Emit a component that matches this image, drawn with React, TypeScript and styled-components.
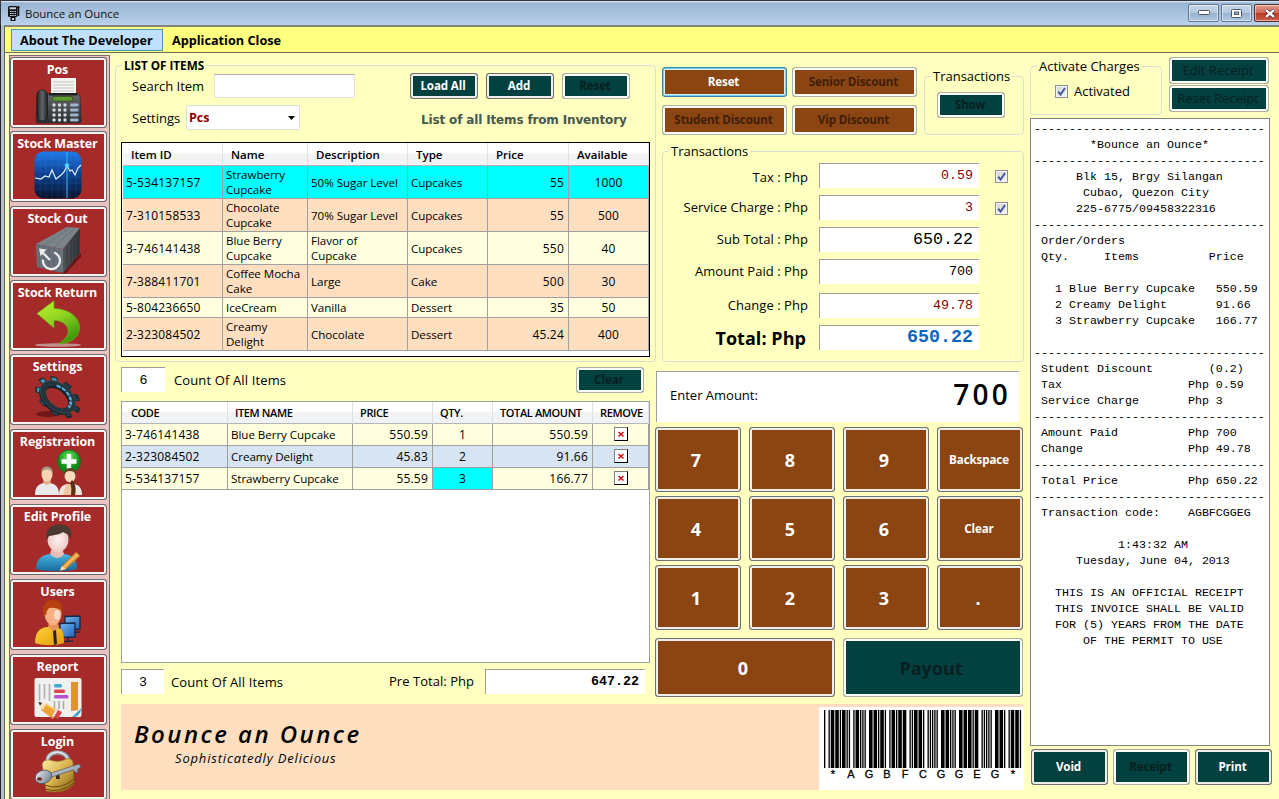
import React from "react";
import styled, { createGlobalStyle, css } from "styled-components";

const ui = `"Open Sans", "Noto Sans", sans-serif`;
const mono = `"Liberation Mono", "Courier New", monospace`;
const cream = "#ffffc0";
const teal = "#034040";
const brown = "#8b4513";

const Global = createGlobalStyle`
  * { box-sizing: border-box; }
  body { margin: 0; background: ${cream}; font: 13px/18px ${ui}; color: #000; overflow: hidden; }
`;

/* ---------- window chrome ---------- */

const Window = styled.div`
  width: 1279px;
  height: 799px;
  overflow: hidden;
  display: flex;
  flex-direction: column;
  background: ${cream};
  border-top: 1px solid #34343c;
`;

const TitleBar = styled.header`
  height: 24px;
  flex: none;
  display: flex;
  align-items: center;
  padding-left: 7px;
  background: linear-gradient(#e4eef8 0, #9ab5d3 2px, #a6c0dc 45%, #b9d1ea 100%);
  border-left: 1px solid #34343c;
`;

const AppTitle = styled.span`
  margin: 1px auto 0 5px;
  font-size: 11.5px;
  letter-spacing: -0.05px;
  color: #111;
`;

const Caption = styled.div<{ $close?: boolean }>`
  flex: none;
  width: 31px;
  height: 18px;
  margin: 0 ${(p) => (p.$close ? -6 : 0)}px 0 2px;
  display: flex;
  align-items: center;
  justify-content: center;
  border: 1px solid ${(p) => (p.$close ? "#5c2a2a" : "#66788e")};
  border-radius: 2px;
  box-shadow: inset 0 0 0 1px rgba(255, 255, 255, 0.5);
  background: ${(p) =>
    p.$close
      ? "linear-gradient(#e39b8c, #cf6a58 48%, #b93a24 52%, #cc6048)"
      : "linear-gradient(#c5d5e8, #b3c8df 48%, #97b1cf 52%, #b0c8e2)"};
`;

const Frame = styled.div`
  flex: 1;
  min-height: 0;
  display: flex;
  flex-direction: column;
  margin-left: 1px;
  border-left: 3px solid #b6bfd3;
  box-shadow: -1px 0 0 #222;
`;

const Client = styled.div`
  flex: 1;
  min-height: 0;
  display: flex;
  flex-direction: column;
  border-left: 1px solid #62625c;
  border-top: 2px solid #85857a;
`;

const MenuBar = styled.nav`
  height: 26px;
  flex: none;
  display: flex;
  align-items: center;
  padding: 0 0 0 6px;
  background: #ffff80;
  border-bottom: 1px solid #6e6e58;
  font-weight: 700;
`;

const MenuItem = styled.span<{ $active?: boolean }>`
  height: 22px;
  line-height: 21px;
  padding: 0 ${(p) => (p.$active ? 9 : 8)}px 0 8px;
  border: 1px solid ${(p) => (p.$active ? "#4c97b4" : "transparent")};
  background: ${(p) => (p.$active ? "#c0e0ff" : "none")};
  font-size: 12.7px;
`;

const Body = styled.div`
  flex: 1;
  min-height: 0;
  display: flex;
  align-items: flex-start;
`;

/* ---------- sidebar ---------- */

const Sidebar = styled.aside`
  flex: none;
  width: 101px;
  height: 746px;
  margin: 2px 0 0 4px;
  padding-top: 1px;
  display: flex;
  flex-direction: column;
  align-items: flex-start;
  border: solid #7a6a6a;
  border-width: 1px 1px 0;
  background: #e9c3c0;
`;

const SideButton = styled.div<{ $gap: number }>`
  flex: none;
  width: 97px;
  height: 71px;
  margin-bottom: ${(p) => p.$gap}px;
  padding: 3px 2px 0 0;
  display: flex;
  flex-direction: column;
  align-items: center;
  border: 1px solid #6b6b6b;
  border-radius: 3px;
  background: #a52a2a;
  box-shadow: inset 0 0 0 2px #f6f3f3;
  color: #fff;
  font-size: 12.5px;
  font-weight: 700;
  letter-spacing: -0.1px;

  svg {
    display: block;
    margin-top: -2px;
  }
`;

/* ---------- shared controls ---------- */

type Tone = "teal" | "brown";

const PushButton = styled.button<{
  $tone: Tone;
  $w: number;
  $h: number;
  $size?: number;
  $focus?: boolean;
}>`
  flex: none;
  width: ${(p) => p.$w}px;
  height: ${(p) => p.$h}px;
  padding: ${(p) => (p.$size ? "1px 4px 0 0" : "0 2px 1px 0")};
  border: 1px solid #707070;
  border-radius: 3px;
  background: ${(p) => (p.$tone === "teal" ? teal : brown)};
  box-shadow: inset 0 0 0 2px #efefea;
  color: #fff;
  font: 700 ${(p) => p.$size ?? 11.6}px ${ui};
  letter-spacing: ${(p) => (p.$size ? 0 : -0.12)}px;
  white-space: nowrap;
  ${(p) =>
    p.$focus &&
    css`
      border-color: #3a87a8;
      box-shadow: inset 0 0 0 1px #6fd0ee, inset 0 0 0 2px #d8f2f6;
    `}
  &:disabled {
    border-color: #adb2a8;
    box-shadow: inset 0 0 0 2px #fbfdf4;
    color: ${(p) => (p.$tone === "teal" ? "#062020" : "#3f1e06")};
  }
`;

const LightCaption = styled(PushButton)`
  font-size: 13px;
  font-weight: 400;
  letter-spacing: 0;
`;

const Group = styled.section`
  border: 1px solid #d8dfd2;
  border-radius: 4px;
`;

const Legend = styled.h2<{ $bold?: boolean }>`
  width: fit-content;
  margin: -10px 0 0 6px;
  padding: 0 2px;
  background: ${cream};
  font: ${(p) => (p.$bold ? 700 : 400)} ${(p) => (p.$bold ? 11.7 : 13)}px/18px ${ui};
  white-space: nowrap;
`;

const Field = styled.div<{
  $w: number;
  $h?: number;
  $size?: number;
  $color?: string;
  $bold?: boolean;
  $center?: boolean;
}>`
  flex: none;
  width: ${(p) => p.$w}px;
  height: ${(p) => p.$h ?? 25}px;
  padding: ${(p) => (p.$center ? "0" : "0 6px 2px 0")};
  display: flex;
  align-items: center;
  justify-content: ${(p) => (p.$center ? "center" : "flex-end")};
  border: solid #a0a096;
  border-width: 1px 0 0 1px;
  background: #fff;
  color: ${(p) => p.$color ?? "#000"};
  font: ${(p) => (p.$bold ? 700 : 400)} ${(p) => p.$size ?? 13.33}px ${mono};
`;

const CheckBox = styled.span`
  flex: none;
  width: 13px;
  height: 13px;
  display: flex;
  align-items: center;
  justify-content: center;
  border: 1px solid #8e8f8f;
  background: linear-gradient(135deg, #cfd4da, #f4f5f6);
  box-shadow: inset 0 0 0 1px #f4f4f4;
`;

const Checked = () => (
  <CheckBox>
    <svg width="9" height="9" viewBox="0 0 9 9">
      <path d="M1.2 4.6 3.6 7.6 8 .9" fill="none" stroke="#46569c" strokeWidth="1.9" />
    </svg>
  </CheckBox>
);

/* ---------- left column ---------- */

const Work = styled.main`
  flex: none;
  width: 908px;
  margin-left: 6px;
  display: grid;
  grid-template-columns: 541px 367px;
  grid-template-rows: 651px 86px;
`;

const Column = styled.div`
  display: flex;
  flex-direction: column;
`;

const ListGroup = styled(Group)`
  height: 297px;
  margin: 12px 0 0 -1px;
  width: 541px;
  padding-left: 5px;
`;

const ListLegend = styled(Legend)`
  margin-left: 1px;
`;

const SearchRow = styled.div`
  display: flex;
  align-items: center;
  height: 26px;
  margin: -1px 0 0 11px;
`;

const SearchLabel = styled.span`
  width: 82px;
`;

const SearchBox = styled.div`
  width: 141px;
  height: 24px;
  margin-right: 55px;
  background: #fff;
  border: 1px solid #e1e3dc;
  border-top-color: #abadb3;
`;

const ListButtons = styled.div`
  display: flex;
  gap: 8px;
`;

const SettingsRow = styled.div`
  display: flex;
  align-items: center;
  height: 25px;
  margin: 6px 0 12px 11px;
`;

const SettingsLabel = styled.span`
  width: 54px;
`;

const Combo = styled.div`
  width: 114px;
  height: 25px;
  padding: 0 4px 0 2px;
  display: flex;
  align-items: center;
  justify-content: space-between;
  border: 1px solid #dcdfd8;
  border-radius: 2px;
  background: #fff;
  color: #8b0000;
  font-size: 12.5px;
  font-weight: 700;
`;

const ListHint = styled.span`
  margin: 5px 0 0 121px;
  color: #46594f;
  font: 700 12px "DejaVu Sans", sans-serif;
  letter-spacing: -0.15px;
  white-space: nowrap;
`;

const ItemTable = styled.div`
  width: 529px;
  height: 215px;
  padding-left: 1px;
  border: 1px solid #000;
  background: #fff;
`;

const ItemRow = styled.div<{ $fill?: string; $h: number }>`
  display: grid;
  grid-template-columns: 100px 85px 100px 80px 81px 80px;
  height: ${(p) => p.$h}px;
  background: ${(p) => p.$fill ?? "#fff"};
`;

const OrderRow = styled(ItemRow)`
  grid-template-columns: 106px 125px 80px 60px 100px 56px;
`;

const HeadCell = styled.div<{ $pad: number }>`
  display: flex;
  align-items: center;
  padding: 1px 0 0 ${(p) => p.$pad}px;
  background: linear-gradient(#fff 45%, #f2f3f5 50%, #f1f2f4);
  border-right: 1px solid #dfe1e4;
  border-bottom: 1px solid #b4b6b8;
  font-size: 11.5px;
  font-weight: 600;
  white-space: nowrap;
`;

const OrderHead = styled(HeadCell)`
  padding-top: 0;
  font-size: 11px;
  letter-spacing: -0.38px;
`;

const Cell = styled.div<{ $align?: "right" | "center"; $fill?: string }>`
  display: flex;
  align-items: center;
  justify-content: ${(p) =>
    p.$align === "right" ? "flex-end" : p.$align === "center" ? "center" : "flex-start"};
  padding: 0 ${(p) => (p.$align === "right" ? 4 : p.$align === "center" ? 0 : 3)}px 0
    ${(p) => (p.$align === "center" ? 0 : 3)}px;
  border: solid #a0a0a0;
  border-width: 0 1px 1px 0;
  background: ${(p) => p.$fill ?? "none"};
  font-size: 11.6px;
  line-height: 15px;
  letter-spacing: -0.05px;
`;

const NumberCell = styled(Cell)`
  font-size: 12px;
  letter-spacing: 0.2px;
`;

const CountRow = styled.div`
  display: flex;
  align-items: center;
  height: 27px;
  margin: 4px 0 8px 5px;
`;

const CountLabel = styled.span<{ $gap: number }>`
  margin-left: ${(p) => p.$gap}px;
  letter-spacing: 0.13px;
`;

const ClearSlot = styled.div`
  display: flex;
  margin: 0 13px 0 auto;
`;

const OrderTable = styled.div`
  width: 529px;
  height: 262px;
  margin-left: 5px;
  border: 1px solid #a0a0a0;
  background: #fff;
`;

const RemoveBox = styled.span`
  width: 14px;
  height: 14px;
  margin-bottom: 1px;
  display: flex;
  align-items: center;
  justify-content: center;
  border: 1px solid #000;
  border-top-color: #808080;
  border-left-color: #808080;
  background: #fff;
`;

const TotalRow = styled.div`
  display: flex;
  align-items: center;
  height: 25px;
  margin: 6px 0 0 5px;
`;

const PreTotalLabel = styled.span`
  margin: -1px 11px 0 auto;
  letter-spacing: 0.04px;
`;

const PreTotalField = styled(Field)`
  margin-right: 12px;
`;

/* ---------- middle column ---------- */

const Middle = styled(Column)`
  padding: 14px 0 0 5px;
`;

const TopRow = styled.div`
  display: flex;
  height: 68px;
`;

const Discounts = styled.div`
  display: grid;
  grid-template-columns: 125px 125px;
  gap: 8px 5px;
  height: 68px;
`;

const ShowGroup = styled(Group)`
  width: 100px;
  height: 59px;
  margin: 9px 0 0 7px;
`;

const ShowSlot = styled.div`
  display: flex;
  padding: 7px 0 0 12px;
`;

const TransactionGroup = styled(Group)`
  width: 362px;
  height: 211px;
  margin-top: 16px;
`;

const AmountRow = styled.div<{ $gap?: number; $shift?: number }>`
  display: flex;
  align-items: center;
  height: 25px;
  margin-bottom: ${(p) => p.$gap ?? 7}px;

  > label {
    width: 146px;
    margin: ${(p) => p.$shift ?? -2}px 11px 0 -1px;
    text-align: right;
    white-space: nowrap;
    letter-spacing: 0.05px;
  }
  > ${CheckBox} {
    margin: 2px 0 0 16px;
  }
`;

const TotalLabel = styled.label`
  font-size: 18px;
  font-weight: 700;
  padding-right: 2px;
`;

const AmountRows = styled.div`
  padding-top: 3px;
`;

const EnterPanel = styled.div`
  width: 363px;
  height: 51px;
  margin: 9px 0 5px -6px;
  padding: 0 8px 4px 13px;
  display: flex;
  align-items: center;
  justify-content: space-between;
  border: solid #a0a096;
  border-width: 1px 0 0 1px;
  background: #fff;
`;

const EnterValue = styled.span`
  font: 600 28px/40px ${ui};
  letter-spacing: 3.2px;
  margin-top: -2px;
`;

const Keypad = styled.div`
  display: grid;
  grid-template-columns: repeat(4, 86px);
  grid-auto-rows: 65px;
  gap: 4px 8px;
  margin-left: -7px;
`;

const WideKeys = styled.div`
  display: flex;
  gap: 8px;
  margin: 8px 0 0 -7px;
`;

/* ---------- banner ---------- */

const Banner = styled.footer`
  grid-column: 1 / 3;
  margin: 0 1px 0 5px;
  display: flex;
  justify-content: space-between;
  background: #ffdfc0;
`;

const Brand = styled.div`
  padding: 14px 0 0 13px;
`;

const BrandName = styled.div`
  font: italic 600 24px/32px "Open Sans", sans-serif;
  letter-spacing: 2.45px;
  white-space: nowrap;
`;

const BrandLine = styled.div`
  margin-left: 41px;
  font: italic 500 13px/17px "Open Sans", sans-serif;
  letter-spacing: 0.83px;
  white-space: nowrap;
`;

const Barcode = styled.div`
  width: 205px;
  height: 83px;
  margin-top: 3px;
  margin-right: -1px;
  padding: 3px 0 0 5px;
  background: #fff;

  svg {
    display: block;
  }
`;

const BarcodeText = styled.div`
  width: 198px;
  display: grid;
  grid-template-columns: repeat(11, 18px);
  justify-items: center;
  font: 11px/13px "Liberation Sans", Arial, sans-serif;
  -webkit-text-stroke: 0.3px #000;
`;

/* ---------- receipt column ---------- */

const ReceiptColumn = styled(Column)`
  flex: none;
  width: 242px;
  margin: 4px 0 0 6px;
`;

const ReceiptTop = styled.div`
  display: flex;
  justify-content: space-between;
  height: 61px;
  padding-right: 3px;
`;

const ChargesGroup = styled(Group)`
  width: 132px;
  height: 49px;
  margin-top: 9px;
`;

const ActivatedRow = styled.label`
  display: flex;
  align-items: center;
  gap: 6px;
  margin: 7px 0 0 24px;
`;

const StackedButtons = styled.div`
  display: flex;
  flex-direction: column;
  gap: 1px;
`;

const Paper = styled.pre`
  width: 240px;
  height: 628px;
  margin: 0;
  padding: 2px 0 0 3px;
  border: 1px solid #82828a;
  background: #fff;
  font: 11.67px/16px ${mono};
  overflow: hidden;
`;

const ReceiptButtons = styled.div`
  display: flex;
  gap: 5px;
  margin: 3px 0 0 1px;
`;

/* ---------- data ---------- */

const items = [
  ["5-534137157", "Strawberry Cupcake", "50% Sugar Level", "Cupcakes", "55", "1000"],
  ["7-310158533", "Chocolate Cupcake", "70% Sugar Level", "Cupcakes", "55", "500"],
  ["3-746141438", "Blue Berry Cupcake", "Flavor of Cupcake", "Cupcakes", "550", "40"],
  ["7-388411701", "Coffee Mocha Cake", "Large", "Cake", "500", "30"],
  ["5-804236650", "IceCream", "Vanilla", "Dessert", "35", "50"],
  ["2-323084502", "Creamy Delight", "Chocolate", "Dessert", "45.24", "400"],
];
const itemFills = ["#00ffff", "#ffdfc0", "#ffffdf", "#ffdfc0", "#ffffdf", "#ffdfc0"];

const orders = [
  ["3-746141438", "Blue Berry Cupcake", "550.59", "1", "550.59"],
  ["2-323084502", "Creamy Delight", "45.83", "2", "91.66"],
  ["5-534137157", "Strawberry Cupcake", "55.59", "3", "166.77"],
];

const rule = "-".repeat(33);
const receipt = [
  rule,
  "        *Bounce an Ounce*",
  rule,
  "      Blk 15, Brgy Silangan",
  "       Cubao, Quezon City",
  "      225-6775/09458322316",
  rule,
  " Order/Orders",
  " Qty.     Items          Price",
  "",
  "   1 Blue Berry Cupcake   550.59",
  "   2 Creamy Delight       91.66",
  "   3 Strawberry Cupcake   166.77",
  "",
  rule,
  " Student Discount        (0.2)",
  " Tax                  Php 0.59",
  " Service Charge       Php 3",
  rule,
  " Amount Paid          Php 700",
  " Change               Php 49.78",
  rule,
  " Total Price          Php 650.22",
  rule,
  " Transaction code:    AGBFCGGEG",
  "",
  "            1:43:32 AM",
  "      Tuesday, June 04, 2013",
  "",
  "   THIS IS AN OFFICIAL RECEIPT",
  "   THIS INVOICE SHALL BE VALID",
  "   FOR (5) YEARS FROM THE DATE",
  "       OF THE PERMIT TO USE",
].join("\n");

/* Code 39: nine alternating bars and spaces, w = wide, n = narrow */
const code39: Record<string, string> = {
  "*": "nwnnwnwnn",
  A: "wnnnnwnnw",
  B: "nnwnnwnnw",
  C: "wnwnnwnnn",
  E: "wnnnwwnnn",
  F: "nnwnwwnnn",
  G: "nnnnnwwnw",
};
const code = "*AGBFCGGEG*";
const bars: { x: number; w: number }[] = [];
code.split("").forEach((ch, i) => {
  let x = i * 18;
  code39[ch].split("").forEach((k, j) => {
    const w = (k === "w" ? 3 : 1) * 1.125;
    if (j % 2 === 0) bars.push({ x, w: w + 0.2 });
    x += w;
  });
});

/* ---------- sidebar icons ---------- */

const Svg = ({ children }: { children: React.ReactNode }) => (
  <svg width="48" height="48" viewBox="0 0 48 48">{children}</svg>
);

const PosIcon = () => (
  <Svg>
    <defs>
      <linearGradient id="posBody" x2="0" y2="1"><stop stopColor="#666a6c" /><stop offset="1" stopColor="#2b2e30" /></linearGradient>
      <linearGradient id="posHand" x2="1" y2="0"><stop stopColor="#222" /><stop offset=".5" stopColor="#62666a" /><stop offset="1" stopColor="#202224" /></linearGradient>
    </defs>
    <path d="M8 17h34q4 0 4.200 3l1 24q0 2-2 2H4q-2 0-2-2l1-24q1-3 5-3z" fill="url(#posBody)" stroke="#242628" strokeWidth=".6" />
    <path d="M17 1h25v16H17z" fill="#f4f4f2" />
    <path d="M19 5h21M19 8h21M19 11h21M19 14h21" stroke="#c4c6c4" strokeWidth="1" />
    <rect x="15" y="16" width="28" height="2.500" fill="#1d1f20" />
    <rect x="18.500" y="19.500" width="20" height="4.500" rx="1.500" fill="#5f9a2e" stroke="#2f4a18" strokeWidth=".7" />
    <g fill="#d7dadb">
      {[28, 33, 38, 43].map((y) => [20, 25.500, 31].map((x) => <circle key={`${x}${y}`} cx={x} cy={y} r="1.700" />))}
    </g>
    <g fill="#9fb4cc">{[26.500, 31.500, 36.500, 41.500].map((y) => <rect key={y} x="36" y={y} width="8.500" height="3" rx="1" />)}</g>
    <rect x="3" y="13" width="10.500" height="31" rx="5" fill="url(#posHand)" stroke="#151617" strokeWidth=".7" />
  </Svg>
);

const StockMasterIcon = () => (
  <Svg>
    <defs>
      <linearGradient id="smBg" x2="0" y2="1"><stop stopColor="#1f7be8" /><stop offset=".45" stopColor="#0d4493" /><stop offset="1" stopColor="#06122c" /></linearGradient>
    </defs>
    <rect x=".5" y=".5" width="47" height="47" rx="9" fill="url(#smBg)" />
    <path d="M6 1v46M12 1v46M18 1v46M24 1v46M30 1v46M36 1v46M42 1v46M1 8h46M1 14h46M1 20h46M1 26h46M1 32h46M1 38h46" stroke="#4a9aff" strokeWidth=".5" opacity=".28" />
    <path d="M33 1v46" stroke="#35b7f2" strokeWidth="1.100" />
    <path d="M1 27l6 1 4-3 4 1 3-7 4 9 5-4 3-3 3-6 3 5 2-1 3 5 3-7 3-3" fill="none" stroke="#e3eefb" strokeWidth="1.200" />
    <circle cx="33" cy="14.500" r="2.200" fill="#53d0ff" />
  </Svg>
);

const StockOutIcon = () => (
  <Svg>
    <defs>
      <linearGradient id="soSide" x2="1" y2="0"><stop stopColor="#50555b" /><stop offset="1" stopColor="#34383c" /></linearGradient>
    </defs>
    <path d="M26 47L47 27v4L31 48z" fill="#3a0d0d" opacity=".6" />
    <path d="M2 18L33 1l13 1-17 21z" fill="#7a828a" />
    <path d="M11 19L36 1.500M20 21L41 2" stroke="#656c73" strokeWidth=".7" />
    <path d="M29 23L46 2v25L29 47z" fill="url(#soSide)" />
    <path d="M33 19v22M37 14v22M40 10v23M43 7v23" stroke="#2a2d31" strokeWidth=".6" />
    <path d="M2 18l27 5v24L3 41z" fill="#69717a" />
    <path d="M5 19v22M10 20v22.500M15 21v23M20 22v23M25 23v23" stroke="#565d64" strokeWidth=".7" />
    <path d="M7 25l9 9M20 26.500a8.500 8.500 0 1 1-11 7" fill="none" stroke="#eceeee" strokeWidth="2.300" />
    <path d="M5 22.500l7.500 1-6 6.500z" fill="#eceeee" />
  </Svg>
);

const StockReturnIcon = () => (
  <Svg>
    <defs>
      <linearGradient id="srArrow" x2=".6" y2="1"><stop stopColor="#c2f02e" /><stop offset=".5" stopColor="#8fd422" /><stop offset="1" stopColor="#3f9a0b" /></linearGradient>
    </defs>
    <ellipse cx="24" cy="45" rx="23" ry="1.700" fill="#c9a9a9" opacity=".8" />
    <path d="M3 13.500L20 .8v7.800C35 9 45 17 45.500 27 46 36 38 43.500 24 44c8-4.500 11-9.500 10-14.500C33 24 27 20.500 20 20.300V28z" fill="url(#srArrow)" stroke="#6fae16" strokeWidth=".7" />
  </Svg>
);

const gearTeeth = Array.from({ length: 9 }, (_, i) => i * 40);
const SettingsIcon = () => (
  <Svg>
    <ellipse cx="14" cy="40" rx="12" ry="3" fill="#5c1010" opacity=".7" />
    <g transform="translate(24 23) rotate(40) scale(.92 .6)">
      {gearTeeth.map((a) => (
        <g key={a} transform={`rotate(${a})`}>
          <rect x="-4.500" y="-28" width="9" height="10" rx="1.500" fill="#1b2a32" />
          <rect x="-3" y="-26" width="6" height="4" fill="#4e9fc6" opacity={a > 140 ? 0.9 : 0.15} />
        </g>
      ))}
      <circle r="18" cy="4" fill="none" stroke="#16222a" strokeWidth="7" />
      <circle r="18.500" fill="none" stroke="#25353e" strokeWidth="7" />
      <path d="M-9-13A16 16 0 0 1 16 2" fill="none" stroke="#56a9d2" strokeWidth="3.500" strokeDasharray="5 1.500" />
      <circle r="22" fill="none" stroke="#43555f" strokeWidth=".8" />
    </g>
  </Svg>
);

const RegistrationIcon = () => (
  <Svg>
    <defs>
      <radialGradient id="rgAdd" cy=".3"><stop stopColor="#6fe860" /><stop offset="1" stopColor="#0b8a17" /></radialGradient>
    </defs>
    <circle cx="35" cy="12.500" r="11.500" fill="url(#rgAdd)" stroke="#0a6a10" strokeWidth=".7" />
    <path d="M32.800 5h4.400v5.300h5.300v4.400h-5.300V20h-4.400v-5.300h-5.300v-4.400h5.300z" fill="#fff" />
    <path d="M1 46c0-8 3-11 9-12h6c6 1 9 4 9 12z" fill="#ece9ea" />
    <path d="M9 33q4 6 8 0l-1-4h-6z" fill="#e2ac85" />
    <ellipse cx="13" cy="25.500" rx="5.500" ry="7" fill="#f6d3b3" />
    <path d="M7.300 24Q7 17.500 13 17.500T18.700 24q-2-3.500-5.700-3.500T7.300 24z" fill="#a89a83" />
    <path d="M25 46c0-7 3-10 8-11h7c5 1 8 4 8 11z" fill="#efe6e2" />
    <path d="M29 46l3-11h8l3 11z" fill="#f0c6a2" />
    <ellipse cx="36" cy="27" rx="5.500" ry="6.500" fill="#f8dabc" />
    <path d="M30 27q0-8 6-8t6 8l-2-4q-4-2-8 0z" fill="#6b3d22" />
    <path d="M38 31q5 4 3 15h-4q1-8-1-12z" fill="#5b3018" />
  </Svg>
);

const EditProfileIcon = () => (
  <Svg>
    <defs>
      <linearGradient id="epShirt" x2="0" y2="1"><stop stopColor="#49b4de" /><stop offset="1" stopColor="#146a9c" /></linearGradient>
      <radialGradient id="epFace"><stop stopColor="#fdf2f0" /><stop offset="1" stopColor="#eccbc6" /></radialGradient>
    </defs>
    <path d="M2 45c0-9 5-14 14-15h14c9 1 13 6 13 15-8 3-32 3-41 0z" fill="url(#epShirt)" />
    <path d="M16 30q8 8 14 0l-2-6H18z" fill="#e6bdb6" />
    <ellipse cx="24" cy="15.500" rx="10.500" ry="12.500" fill="url(#epFace)" />
    <path d="M13 16C11 6 16 .5 26 .5c9 0 13 5.500 11 14.500l-2-4c-3-1-4-2-6-3-4 3-9 3-14 4z" fill="#4a3a31" />
    <path d="M28 42L42 28l4 4-14 13-6 1.500z" fill="#e59a3c" stroke="#a8651a" strokeWidth=".6" />
    <path d="M30 43L44 30" stroke="#f8c77b" strokeWidth="1.300" />
    <path d="M28 42l-2 4.500L32 45z" fill="#f3dfc4" />
  </Svg>
);

const UsersIcon = () => (
  <Svg>
    <defs>
      <linearGradient id="usShirt" x2="1" y2="1"><stop stopColor="#ffd23b" /><stop offset="1" stopColor="#e49a06" /></linearGradient>
      <linearGradient id="usScreen" x2="1" y2="1"><stop stopColor="#79b9f2" /><stop offset="1" stopColor="#1d5fb4" /></linearGradient>
    </defs>
    <g stroke="#152a48" strokeWidth="1.300" fill="url(#usScreen)">
      <path d="M31 17.500l15-.5v13l-15 .5z" />
      <path d="M26 24.500l15-.5v14l-15 .5z" />
    </g>
    <path d="M29 42.500l10-.5M34 38v4M40 33.500l6-.5" stroke="#1b2c44" strokeWidth="1.500" />
    <path d="M1 44c0-10 4-15 12-16h9c6 1 8 5 8 16-8 3-21 3-29 0z" fill="url(#usShirt)" />
    <path d="M14 28l6 5 5-5-2-5h-8z" fill="#e8955d" />
    <path d="M19 32l3-1 1 14-3 1z" fill="#2c2220" />
    <ellipse cx="19" cy="14.500" rx="8.500" ry="11.500" fill="#f7b083" />
    <path d="M9.500 16C7 5 13 1 18 1c8 0 11 3 10 12q-4-5-13-4-3 3-3 7z" fill="#b8400f" />
    <ellipse cx="23" cy="16" rx="3" ry="5" fill="#fff" opacity=".55" />
  </Svg>
);

const ReportIcon = () => (
  <Svg>
    <rect x=".5" y="4" width="47" height="39" rx="2" fill="#f0f0ee" />
    <path d="M5.500 10v17M10.500 10v15M15.500 10v17" stroke="#b2b4b6" strokeWidth="1.700" />
    <rect x="20" y="10" width="8" height="3.500" rx="1.500" fill="#3fa9d6" />
    <rect x="20" y="15.500" width="11" height="3.500" rx="1.500" fill="#d8484e" />
    <rect x="20" y="21" width="14.500" height="3.500" rx="1.500" fill="#b356cf" />
    <path d="M20.500 27v8M25 27v8M29.500 27v8" stroke="#a7a9ab" strokeWidth="1.500" />
    <path d="M37 8h7v28l-7 1z" fill="#e0922c" />
    <path d="M38 43l9.500-9q-2 10-9.500 9z" fill="#3ea5cc" />
    <path d="M9 29l15 7-5 9-12-9z" fill="#eda338" />
    <path d="M8.500 35.500L12 30l10 6" stroke="#ffd07a" strokeWidth="1.500" fill="none" />
    <path d="M4.500 28l7.500 1.500-4.500 6z" fill="#f8e5c6" />
    <path d="M4.500 28l3.500.7-2 3z" fill="#222" />
    <path d="M22 35l6 3-4 7-6-3z" fill="#d9434a" />
    <path d="M22 35l2 1-4 7-2-1z" fill="#e9e9e9" />
  </Svg>
);

const LoginIcon = () => (
  <Svg>
    <defs>
      <linearGradient id="lgBody" x2="1" y2="1"><stop stopColor="#fff0a8" /><stop offset=".5" stopColor="#d8b14a" /><stop offset="1" stopColor="#7a5812" /></linearGradient>
      <linearGradient id="lgKey" x2="1" y2="1"><stop stopColor="#e9edf2" /><stop offset="1" stopColor="#6a7686" /></linearGradient>
    </defs>
    <path d="M14 15C10 1 33-1 35 13" fill="none" stroke="#8e949b" strokeWidth="4.500" />
    <path d="M14 14C10 1 33-1 34 12" fill="none" stroke="#e2e5e8" strokeWidth="1.800" />
    <path d="M8 15q2-5 8-4 9 3 16-1 6-1 7 3l1 22q-9 11-28 7z" fill="url(#lgBody)" stroke="#8a6a20" strokeWidth=".7" />
    <path d="M10 36q16 6 30-6M11 40q15 5 29-6" stroke="#6b4c0e" strokeWidth="1" fill="none" />
    <path d="M22 24h3l1 6h-4z" fill="#3a2a0a" />
    <path d="M14 25l31-10 2 3-3 2v4l-3-1-2-2-24 8z" fill="url(#lgKey)" stroke="#4c5664" strokeWidth=".7" />
    <ellipse cx="9.500" cy="28" rx="8.500" ry="6.500" transform="rotate(-20 9 28)" fill="url(#lgKey)" stroke="#4c5664" strokeWidth=".8" />
    <ellipse cx="5.500" cy="30" rx="2.500" ry="1.700" fill="#7c2020" />
  </Svg>
);

const nav: [string, () => React.ReactElement, number][] = [
  ["Pos", PosIcon, 3],
  ["Stock Master", StockMasterIcon, 4],
  ["Stock Out", StockOutIcon, 3],
  ["Stock Return", StockReturnIcon, 3],
  ["Settings", SettingsIcon, 4],
  ["Registration", RegistrationIcon, 4],
  ["Edit Profile", EditProfileIcon, 4],
  ["Users", UsersIcon, 4],
  ["Report", ReportIcon, 4],
  ["Login", LoginIcon, 0],
];

const keys = ["7", "8", "9", "Backspace", "4", "5", "6", "Clear", "1", "2", "3", "."];

export default function App() {
  return (
    <>
      <Global />
      <Window>
        <TitleBar>
          <svg width="12" height="17" viewBox="0 0 12 17">
            <rect x="0" y="1" width="9.500" height="11" rx="1.500" fill="#111" />
            <path d="M10.500 1v10M9 2.500h2.500" stroke="#111" strokeWidth="1.500" />
            <rect x="1.500" y="2.300" width="6.500" height="2" fill="#c3d4e6" />
            <path d="M2 6.500h1.500M4.200 6.500h1.500M6.500 6.500H8M2 8.500h1.500M4.200 8.500h1.500M6.500 8.500H8M2 10.500h1.500M4.200 10.500h1.500M6.500 10.500H8" stroke="#c3d4e6" />
            <path d="M2.500 12h5v4h-5z" fill="#111" />
            <path d="M4 13h2v2H4z" fill="#c3d4e6" />
          </svg>
          <AppTitle>Bounce an Ounce</AppTitle>
          <Caption>
            <svg width="12" height="6"><rect x=".5" y=".5" width="11" height="4" rx="1" fill="#fff" stroke="#4a5566" /></svg>
          </Caption>
          <Caption>
            <svg width="11" height="9"><rect x=".5" y=".5" width="10" height="8" rx="1" fill="#fff" stroke="#4a5566" /><rect x="3.500" y="3" width="4" height="2.500" fill="#a9bdd6" stroke="#4a5566" /></svg>
          </Caption>
          <Caption $close>
            <svg width="12" height="9" viewBox="0 0 12 9">
              <path d="M1.800 1l8.400 7M10.200 1L1.800 8" stroke="#4b2a2a" strokeWidth="3.600" />
              <path d="M2 1.100l8 6.800M10 1.100L2 7.900" stroke="#fff" strokeWidth="2.300" />
            </svg>
          </Caption>
        </TitleBar>
        <Frame>
          <Client>
            <MenuBar>
              <MenuItem $active>About The Developer</MenuItem>
              <MenuItem>Application Close</MenuItem>
            </MenuBar>
            <Body>
              <Sidebar>
                {nav.map(([label, Icon, gap]) => (
                  <SideButton key={label} $gap={gap}>
                    {label}
                    <Icon />
                  </SideButton>
                ))}
              </Sidebar>

              <Work>
                <Column>
                  <ListGroup>
                    <ListLegend $bold>LIST OF ITEMS</ListLegend>
                    <SearchRow>
                      <SearchLabel>Search Item</SearchLabel>
                      <SearchBox />
                      <ListButtons>
                        <PushButton $tone="teal" $w={68} $h={26}>Load All</PushButton>
                        <PushButton $tone="teal" $w={68} $h={26}>Add</PushButton>
                        <PushButton $tone="teal" $w={68} $h={26} disabled>Reset</PushButton>
                      </ListButtons>
                    </SearchRow>
                    <SettingsRow>
                      <SettingsLabel>Settings</SettingsLabel>
                      <Combo>
                        Pcs
                        <svg width="7" height="4"><path d="M0 0h7L3.500 4z" /></svg>
                      </Combo>
                      <ListHint>List of all Items from Inventory</ListHint>
                    </SettingsRow>
                    <ItemTable>
                      <ItemRow $h={23}>
                        <HeadCell $pad={8}>Item ID</HeadCell>
                        <HeadCell $pad={8}>Name</HeadCell>
                        <HeadCell $pad={8}>Description</HeadCell>
                        <HeadCell $pad={8}>Type</HeadCell>
                        <HeadCell $pad={8}>Price</HeadCell>
                        <HeadCell $pad={8}>Available</HeadCell>
                      </ItemRow>
                      {items.map((row, i) => (
                        <ItemRow key={row[0]} $h={i === 4 ? 20 : 33} $fill={itemFills[i]}>
                          <NumberCell>{row[0]}</NumberCell>
                          <Cell>{row[1]}</Cell>
                          <Cell>{row[2]}</Cell>
                          <Cell>{row[3]}</Cell>
                          <NumberCell $align="right">{row[4]}</NumberCell>
                          <NumberCell $align="center">{row[5]}</NumberCell>
                        </ItemRow>
                      ))}
                    </ItemTable>
                  </ListGroup>

                  <CountRow>
                    <Field $w={44} $center>6</Field>
                    <CountLabel $gap={9}>Count Of All Items</CountLabel>
                    <ClearSlot>
                      <PushButton $tone="teal" $w={68} $h={26} disabled>Clear</PushButton>
                    </ClearSlot>
                  </CountRow>

                  <OrderTable>
                    <OrderRow $h={22}>
                      <OrderHead $pad={9}>CODE</OrderHead>
                      <OrderHead $pad={7}>ITEM NAME</OrderHead>
                      <OrderHead $pad={7}>PRICE</OrderHead>
                      <OrderHead $pad={7}>QTY.</OrderHead>
                      <OrderHead $pad={7}>TOTAL AMOUNT</OrderHead>
                      <OrderHead $pad={7}>REMOVE</OrderHead>
                    </OrderRow>
                    {orders.map((row, i) => (
                      <OrderRow key={row[0]} $h={22} $fill={i === 1 ? "#d7e4f2" : "#ffffdf"}>
                        <NumberCell>{row[0]}</NumberCell>
                        <Cell>{row[1]}</Cell>
                        <NumberCell $align="right">{row[2]}</NumberCell>
                        <NumberCell $align="center" $fill={i === 2 ? "#00ffff" : undefined}>{row[3]}</NumberCell>
                        <NumberCell $align="right">{row[4]}</NumberCell>
                        <Cell $align="center">
                          <RemoveBox>
                            <svg width="8" height="8" viewBox="0 0 8 8"><path d="M1.500 2l5 4.500M6.500 2l-5 4.500" stroke="#d01010" strokeWidth="1.600" /></svg>
                          </RemoveBox>
                        </Cell>
                      </OrderRow>
                    ))}
                  </OrderTable>

                  <TotalRow>
                    <Field $w={43} $center>3</Field>
                    <CountLabel $gap={7}>Count Of All Items</CountLabel>
                    <PreTotalLabel>Pre Total: Php</PreTotalLabel>
                    <PreTotalField $w={160} $bold>647.22</PreTotalField>
                  </TotalRow>
                </Column>

                <Middle>
                  <TopRow>
                    <Discounts>
                      <PushButton $tone="brown" $w={125} $h={30} $focus>Reset</PushButton>
                      <PushButton $tone="brown" $w={125} $h={30} disabled>Senior Discount</PushButton>
                      <PushButton $tone="brown" $w={125} $h={30} disabled>Student Discount</PushButton>
                      <PushButton $tone="brown" $w={125} $h={30} disabled>Vip Discount</PushButton>
                    </Discounts>
                    <ShowGroup>
                      <Legend>Transactions</Legend>
                      <ShowSlot>
                        <PushButton $tone="teal" $w={68} $h={26} disabled>Show</PushButton>
                      </ShowSlot>
                    </ShowGroup>
                  </TopRow>

                  <TransactionGroup>
                    <Legend>Transactions</Legend>
                    <AmountRows>
                      <AmountRow $shift={2}>
                        <label>Tax : Php</label>
                        <Field $w={160} $color="#8b0000">0.59</Field>
                        <Checked />
                      </AmountRow>
                      <AmountRow>
                        <label>Service Charge : Php</label>
                        <Field $w={160} $color="#8b0000">3</Field>
                        <Checked />
                      </AmountRow>
                      <AmountRow>
                        <label>Sub Total : Php</label>
                        <Field $w={160} $size={16.67}>650.22</Field>
                      </AmountRow>
                      <AmountRow $gap={9}>
                        <label>Amount Paid : Php</label>
                        <Field $w={160}>700</Field>
                      </AmountRow>
                      <AmountRow>
                        <label>Change : Php</label>
                        <Field $w={160} $color="#8b0000">49.78</Field>
                      </AmountRow>
                      <AmountRow $shift={0}>
                        <TotalLabel>Total: Php</TotalLabel>
                        <Field $w={160} $size={18.33} $color="#0a66c2" $bold>650.22</Field>
                      </AmountRow>
                    </AmountRows>
                  </TransactionGroup>

                  <EnterPanel>
                    Enter Amount:
                    <EnterValue>700</EnterValue>
                  </EnterPanel>

                  <Keypad>
                    {keys.map((k) => (
                      <PushButton key={k} $tone="brown" $w={86} $h={65} $size={k.length > 1 ? undefined : 18}>
                        {k}
                      </PushButton>
                    ))}
                  </Keypad>
                  <WideKeys>
                    <PushButton $tone="brown" $w={180} $h={59} $size={18}>0</PushButton>
                    <PushButton $tone="teal" $w={180} $h={59} $size={18} disabled>Payout</PushButton>
                  </WideKeys>
                </Middle>

                <Banner>
                  <Brand>
                    <BrandName>Bounce an Ounce</BrandName>
                    <BrandLine>Sophisticatedly Delicious</BrandLine>
                  </Brand>
                  <Barcode>
                    <svg width="198" height="58">
                      {bars.map((b, i) => <rect key={i} x={b.x} width={b.w} height="58" />)}
                    </svg>
                    <BarcodeText>{code.split("").map((c, i) => <span key={i}>{c}</span>)}</BarcodeText>
                  </Barcode>
                </Banner>
              </Work>

              <ReceiptColumn>
                <ReceiptTop>
                  <ChargesGroup>
                    <Legend>Activate Charges</Legend>
                    <ActivatedRow><Checked />Activated</ActivatedRow>
                  </ChargesGroup>
                  <StackedButtons>
                    <LightCaption $tone="teal" $w={100} $h={27} disabled>Edit Receipt</LightCaption>
                    <LightCaption $tone="teal" $w={100} $h={27} disabled>Reset Receipt</LightCaption>
                  </StackedButtons>
                </ReceiptTop>
                <Paper>{receipt}</Paper>
                <ReceiptButtons>
                  <PushButton $tone="teal" $w={77} $h={36}>Void</PushButton>
                  <PushButton $tone="teal" $w={77} $h={36} disabled>Receipt</PushButton>
                  <PushButton $tone="teal" $w={77} $h={36}>Print</PushButton>
                </ReceiptButtons>
              </ReceiptColumn>
            </Body>
          </Client>
        </Frame>
      </Window>
    </>
  );
}
